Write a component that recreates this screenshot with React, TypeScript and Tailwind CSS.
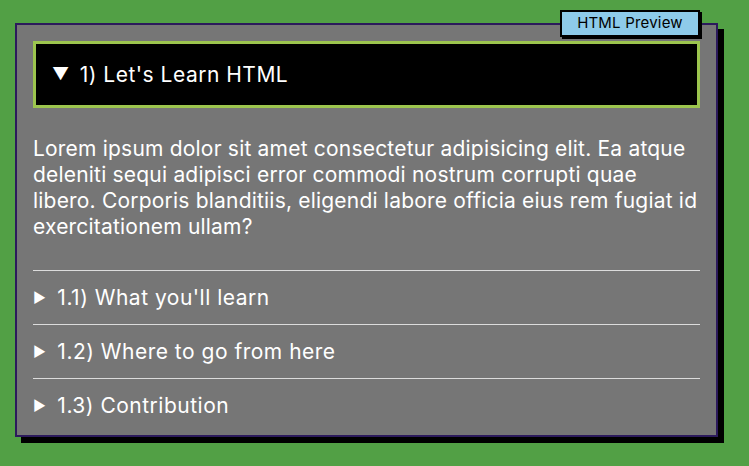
import React from 'react';

const sections = ['1.1) What you\'ll learn', '1.2) Where to go from here', '1.3) Contribution'];

export default function App() {
  return (
    <div className="w-[749px] h-[466px] bg-[#52a045] pt-[23px] pl-[15px] font-['Inter',sans-serif] text-white overflow-hidden">
      <div className="relative w-[703px] h-[414px] bg-[#767676] border-2 border-[#2c1a5c] shadow-[6px_6px_0_#000] px-4 pt-4">
        {/* badge */}
        <div className="absolute -top-[15px] right-[16px] h-[27px] w-[140px] flex items-center justify-center bg-[#8ecbea] border-2 border-black shadow-[2px_2px_0_#000] text-black text-[15px] tracking-[0.2px]">
          HTML Preview
        </div>

        <div className="h-[67px] bg-black border-[3px] border-[#9cc54e] flex items-center pl-4 text-[21px] tracking-[0.5px]">
          <span className="text-[17px] mr-[10px]">▼</span>
          <span>1) Let's Learn HTML</span>
        </div>

        <p className="mt-[28px] text-[21px] leading-[26px] tracking-[0.2px]">
          Lorem ipsum dolor sit amet consectetur adipisicing elit. Ea atque deleniti sequi adipisci error commodi nostrum corrupti quae libero. Corporis blanditiis, eligendi labore officia eius rem fugiat id exercitationem ullam?
        </p>

        <div className="mt-[30px]">
          {sections.map((s) => (
            <div key={s} className="border-t border-[#dcdcdc] h-[54px] flex items-center text-[21px] tracking-[0.5px]">
              <span className="text-[14px] mr-[11px]">▶</span>
              <span>{s}</span>
            </div>
          ))}
        </div>
      </div>
    </div>
  );
}
